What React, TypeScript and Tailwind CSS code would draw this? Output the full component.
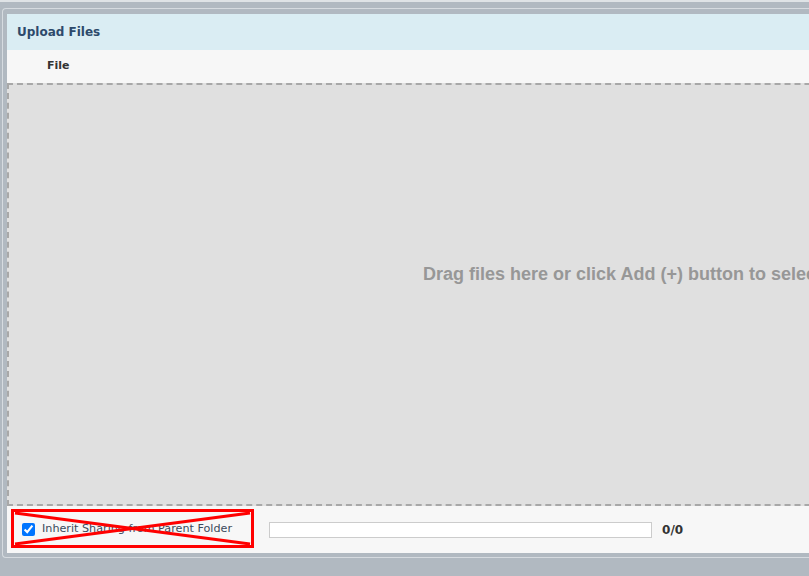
import React from "react";

export default function App() {
  return (
    <div className="relative w-[809px] h-[576px] overflow-hidden bg-[#b1b9c1]">
      <div className="h-[2px] bg-[#dfe3e6]" />
      <div className="ml-[2px] mt-[6px] w-[1400px] rounded-l-[4px] border border-r-0 border-[#d6dbe0] pl-[4px] pt-[5px] pb-[4px]">
        <div className="w-[1272px] bg-[#f7f7f7]">
          <div
            className="flex h-[36px] items-center bg-[#daedf3] pl-[10px] text-[12px] font-bold text-[#2d4a6b]"
            style={{ fontFamily: "Tahoma, 'DejaVu Sans', Verdana, sans-serif" }}
          >
            Upload Files
          </div>
          <div
            className="flex h-[33px] items-center pl-[40px] text-[11px] font-bold text-[#333]"
            style={{ fontFamily: "Tahoma, 'DejaVu Sans', Verdana, sans-serif" }}
          >
            File
          </div>
          <div className="flex h-[423px] justify-center border-2 border-dashed border-[#a8a8a8] bg-[#e0e0e0] pt-[176px]">
            <span
              className="whitespace-nowrap text-[18px] font-bold text-[#979797]"
              style={{ fontFamily: "'Liberation Sans', Arial, sans-serif" }}
            >
              Drag files here or click Add (+) button to select files
            </span>
          </div>
          <div
            className="flex h-[47px] items-center text-[11.2px]"
            style={{ fontFamily: "Tahoma, 'DejaVu Sans', Verdana, sans-serif" }}
          >
            <input
              type="checkbox"
              defaultChecked
              className="ml-[15px] h-[13px] w-[13px] accent-[#0075ff]"
            />
            <span className="ml-[7px] text-[#3b4a5c]">Inherit Sharing from Parent Folder</span>
            <div className="ml-[37px] h-[16px] w-[383px] border border-[#cccccc] bg-white" />
            <span className="ml-[10px] text-[12px] font-bold text-[#333]">0/0</span>
          </div>
        </div>
      </div>
      <svg
        className="pointer-events-none absolute left-[11px] top-[509px]"
        width="243"
        height="39"
        viewBox="0 0 243 39"
      >
        <rect x="1.5" y="1.5" width="240" height="36" fill="none" stroke="#ff0000" strokeWidth="3" />
        <line x1="4" y1="4" x2="239" y2="35" stroke="#ff0000" strokeWidth="3" />
        <line x1="239" y1="4" x2="4" y2="35" stroke="#ff0000" strokeWidth="3" />
      </svg>
    </div>
  );
}
